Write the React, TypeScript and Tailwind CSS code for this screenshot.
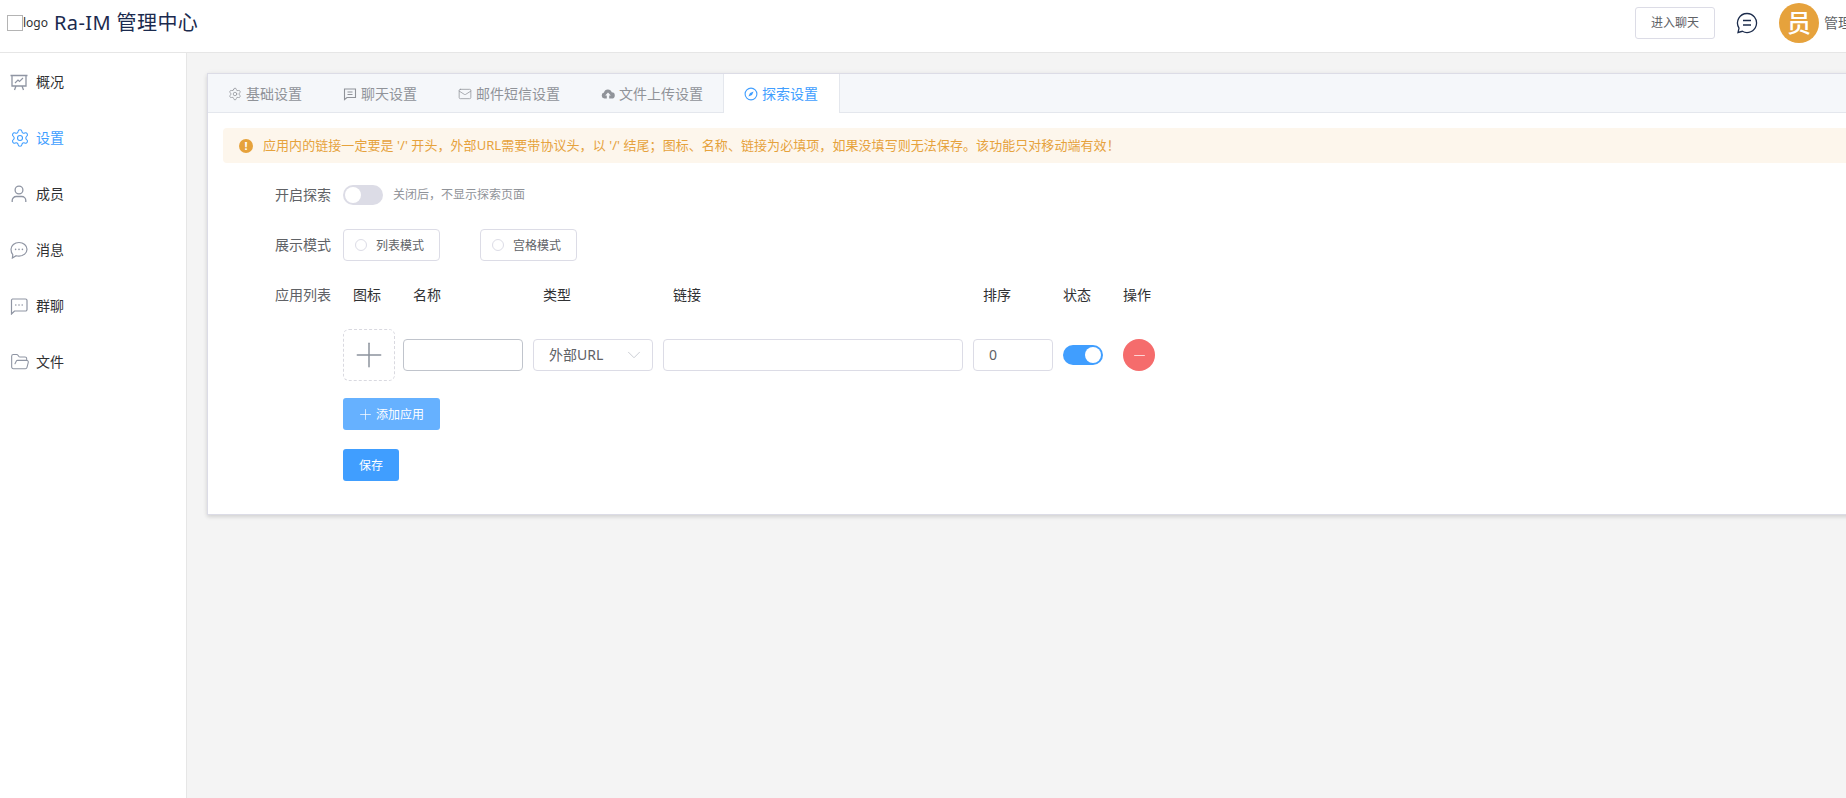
import { Settings, FolderOpen, Mail, Plus, ChevronDown, Minus } from "lucide-react";

function ChartIcon() {
  return (
    <svg width="18" height="18" viewBox="0 0 18 18" fill="none" stroke="#8f95a3" strokeWidth="1.3">
      <path d="M0.5 2.5h17M2 2.5v10.5h14V2.5M6 13l-1.5 4M12 13l1.5 4" />
      <path d="M5 10l3-3 1.5 1.5 3.5-3.5" strokeWidth="1.1" />
    </svg>
  );
}

function PersonIcon() {
  return (
    <svg width="18" height="18" viewBox="0 0 18 18" fill="none" stroke="#8f95a3" strokeWidth="1.3">
      <circle cx="9" cy="5" r="3.9" />
      <path d="M2.2 17v-1.5a4 4 0 0 1 4-4h5.6a4 4 0 0 1 4 4V17" />
    </svg>
  );
}

function RoundChatIcon() {
  return (
    <svg width="18" height="18" viewBox="0 0 18 18" fill="none" stroke="#8f95a3" strokeWidth="1.2">
      <path d="M9 1.5c4.4 0 8 2.9 8 6.8s-3.6 6.800-8 6.800c-1 0-2-.1-2.900-.4L2.400 17l.4-3.400C1.500 12.300 1 10.400 1 8.300 1 4.400 4.600 1.500 9 1.500z" />
      <circle cx="5.600" cy="8.400" r="0.8" fill="#8f95a3" stroke="none" />
      <circle cx="9" cy="8.400" r="0.8" fill="#8f95a3" stroke="none" />
      <circle cx="12.400" cy="8.400" r="0.8" fill="#8f95a3" stroke="none" />
    </svg>
  );
}

function SquareChatIcon() {
  return (
    <svg width="18" height="18" viewBox="0 0 18 18" fill="none" stroke="#8f95a3" strokeWidth="1.2">
      <path d="M2.500 2h13a1.500 1.500 0 0 1 1.500 1.500v9a1.500 1.500 0 0 1-1.500 1.500H4.500l-3 3V3.500A1.500 1.500 0 0 1 2.500 2z" />
      <circle cx="5.800" cy="8" r="0.8" fill="#8f95a3" stroke="none" />
      <circle cx="9" cy="8" r="0.8" fill="#8f95a3" stroke="none" />
      <circle cx="12.200" cy="8" r="0.8" fill="#8f95a3" stroke="none" />
    </svg>
  );
}

function ChatTabIcon() {
  return (
    <svg width="14" height="14" viewBox="0 0 14 14" fill="none" stroke="#909399" strokeWidth="1.1">
      <path d="M1.5 2h11v8.500H4L1.500 12.500z" />
      <path d="M4.500 5h5M4.500 7.500h5" />
    </svg>
  );
}

function CloudIcon() {
  return (
    <svg width="14" height="14" viewBox="0 0 14 14" fill="#909399">
      <path d="M3.400 11.500A3 3 0 0 1 3 5.600a4 4 0 0 1 7.700-.3 3.100 3.100 0 0 1 0 6.200H8.200V8.600h1.600L7 5.600 4.200 8.600h1.600v2.900z" />
    </svg>
  );
}

function CompassIcon() {
  return (
    <svg width="14" height="14" viewBox="0 0 14 14" fill="none" stroke="#409eff" strokeWidth="1.1">
      <circle cx="7" cy="7" r="5.900" />
      <path d="M9.600 4.400L8 8 4.400 9.600 6 6z" fill="#409eff" stroke="none" />
    </svg>
  );
}

function BubbleIcon() {
  return (
    <svg width="22" height="22" viewBox="0 0 22 22" fill="none" stroke="#1c2c4c" strokeWidth="1.3">
      <path d="M11 1.500a9.500 9.500 0 1 1-4.600 17.800L2 20.500l1-4.400A9.500 9.500 0 0 1 11 1.500z" />
      <path d="M7 8.500h8M7 13h8" strokeWidth="1.6" />
    </svg>
  );
}

const menu = [
  { label: "概况", icon: <ChartIcon /> },
  { label: "设置", icon: <Settings size={20} strokeWidth={1.3} color="#409eff" />, active: true },
  { label: "成员", icon: <PersonIcon /> },
  { label: "消息", icon: <RoundChatIcon /> },
  { label: "群聊", icon: <SquareChatIcon /> },
  { label: "文件", icon: <FolderOpen size={20} strokeWidth={1.3} color="#8f95a3" /> },
];

const tabs = [
  { label: "基础设置", icon: <Settings size={14} strokeWidth={1.3} color="#909399" /> },
  { label: "聊天设置", icon: <ChatTabIcon /> },
  { label: "邮件短信设置", icon: <Mail size={14} strokeWidth={1.3} color="#909399" /> },
  { label: "文件上传设置", icon: <CloudIcon /> },
  { label: "探索设置", icon: <CompassIcon />, active: true },
];

const columns = "grid grid-cols-[60px_130px_130px_310px_90px_60px_32px]";

function FormRow({ label, children }: { label: string; children: React.ReactNode }) {
  return (
    <div className="flex items-center h-10 mb-2.5">
      <div className="w-[120px] pr-3 text-right text-sm text-[#606266]">{label}</div>
      <div className="flex items-center">{children}</div>
    </div>
  );
}

function RadioBox({ label, className }: { label: string; className?: string }) {
  return (
    <div className={"flex items-center w-[97px] h-8 pl-[11px] border border-[#dcdce6] rounded-[4px] " + (className ?? "")}>
      <span className="w-3 h-3 rounded-full border border-[#dcdce6] mr-[9px]" />
      <span className="pt-px text-xs text-[#606266]">{label}</span>
    </div>
  );
}

export default function App() {
  return (
    <div className="h-[798px] w-[1846px] overflow-hidden bg-[#f4f4f4] font-['Noto_Sans','Noto_Sans_CJK_SC',sans-serif]">
      <header className="flex items-center justify-between w-[1872px] h-[53px] pb-[6px] pl-[7px] bg-white border-b border-[#e6e6e6]">
        <div className="flex items-center">
          <span className="w-4 h-4 border border-[#b4b4b4]" />
          <span className="text-xs text-[#303133]">logo</span>
          <span className="ml-[6px] text-xl leading-none tracking-[0.4px] text-[#1b2a4e]">Ra-IM 管理中心</span>
        </div>
        <div className="flex items-center">
          <button className="w-20 h-8 bg-white border border-[#dcdce6] rounded-[3px] text-xs text-[#606266]">
            进入聊天
          </button>
          <span className="ml-[21px]"><BubbleIcon /></span>
          <span className="flex items-center justify-center w-10 h-10 ml-[21px] rounded-full bg-[#e6a23c] text-white text-2xl font-medium leading-none">
            员
          </span>
          <span className="ml-[5px] w-12 text-sm text-[#606266]">管理员</span>
        </div>
      </header>

      <div className="flex h-[745px]">
        <aside className="w-[187px] shrink-0 pt-px bg-white border-r border-[#e6e6e6]">
          {menu.map((item) => (
            <div key={item.label} className="flex items-center h-14 pl-[10px]">
              <span className="w-[26px]">{item.icon}</span>
              <span className={"text-sm " + (item.active ? "text-[#409eff]" : "text-[#303133]")}>{item.label}</span>
            </div>
          ))}
        </aside>

        <main className="pl-5 pt-5">
          <div className="w-[1700px] h-[442px] bg-white border border-[#dcdce6] shadow-[0_2px_4px_rgba(0,0,0,0.12),0_0_6px_rgba(0,0,0,0.04)]">
            <div className="flex h-[39px] bg-[#f5f7fa] border-b border-[#e4e7ed]">
              {tabs.map((tab) => (
                <div
                  key={tab.label}
                  className={
                    "flex items-center gap-1 h-[39px] pl-5 -ml-px border-x text-sm " +
                    (tab.active
                      ? "pr-[21px] bg-white border-[#e4e7ed] text-[#409eff]"
                      : "pr-5 border-transparent text-[#909399]")
                  }
                >
                  {tab.icon}
                  <span>{tab.label}</span>
                </div>
              ))}
            </div>

            <div className="px-[15px] pt-[15px]">
              <div className="flex items-center h-[35px] pl-4 bg-[#fdf6ec] rounded-l-[4px] text-[13px] tracking-[0.06px] text-[#e6a23c]">
                <span className="flex items-center justify-center w-[14px] h-[14px] mr-[10px] rounded-full bg-[#e6a23c] text-white text-[11px] font-bold leading-none">
                  !
                </span>
                应用内的链接一定要是 '/' 开头，外部URL需要带协议头，以 '/' 结尾；图标、名称、链接为必填项，如果没填写则无法保存。该功能只对移动端有效！
              </div>

              <div className="mt-3">
                <FormRow label="开启探索">
                  <span className="flex items-center w-10 h-5 p-0.5 rounded-full bg-[#dcdce6]">
                    <span className="w-4 h-4 rounded-full bg-white" />
                  </span>
                  <span className="ml-[10px] text-xs text-[#909399]">关闭后，不显示探索页面</span>
                </FormRow>
                <FormRow label="展示模式">
                  <RadioBox label="列表模式" />
                  <RadioBox label="宫格模式" className="ml-10" />
                </FormRow>

                <div className="flex items-center h-10">
                  <div className="w-[120px] pr-3 text-right text-sm text-[#606266]">应用列表</div>
                  <div className={columns + " text-sm text-[#303133]"}>
                    <span className="pl-[10px]">图标</span>
                    <span className="pl-[10px]">名称</span>
                    <span className="pl-[10px]">类型</span>
                    <span className="pl-[10px]">链接</span>
                    <span className="pl-[10px]">排序</span>
                    <span>状态</span>
                    <span>操作</span>
                  </div>
                </div>

                <div className="ml-[120px] mt-[14px]">
                  <div className={columns + " items-center"}>
                    <div className="flex items-center justify-center w-[52px] h-[52px] border border-dashed border-[#d9d9e0] rounded-[6px]">
                      <Plus size={40} strokeWidth={0.9} color="#8c939d" />
                    </div>
                    <input className="w-[120px] h-8 px-[15px] border border-[#c0c4cc] rounded-[4px] outline-none" />
                    <div className="flex items-center justify-between w-[120px] h-8 pb-px pl-[15px] pr-[7px] border border-[#dcdce6] rounded-[4px] text-sm text-[#606266]">
                      外部URL
                      <ChevronDown size={22} strokeWidth={0.9} color="#c0c4cc" />
                    </div>
                    <input className="w-[300px] h-8 px-[15px] border border-[#dcdce6] rounded-[4px] outline-none" />
                    <input
                      defaultValue="0"
                      className="w-20 h-8 pb-px px-[15px] border border-[#dcdce6] rounded-[4px] text-sm text-[#606266] outline-none"
                    />
                    <span className="flex items-center justify-end w-10 h-5 p-0.5 rounded-full bg-[#409eff]">
                      <span className="w-4 h-4 rounded-full bg-white" />
                    </span>
                    <span className="flex items-center justify-center w-8 h-8 rounded-full bg-[#f56c6c]">
                      <Minus size={17} strokeWidth={1} color="#ffffff" />
                    </span>
                  </div>

                  <button className="flex items-center gap-0.5 w-[97px] h-8 mt-[17px] pt-px pl-[14px] bg-[#66b1ff] rounded-[3px] text-xs text-white">
                    <Plus size={17} strokeWidth={1} />
                    添加应用
                  </button>
                  <button className="block w-14 h-8 mt-[19px] pt-px bg-[#409eff] rounded-[3px] text-xs text-white">
                    保存
                  </button>
                </div>
              </div>
            </div>
          </div>
        </main>
      </div>
    </div>
  );
}
